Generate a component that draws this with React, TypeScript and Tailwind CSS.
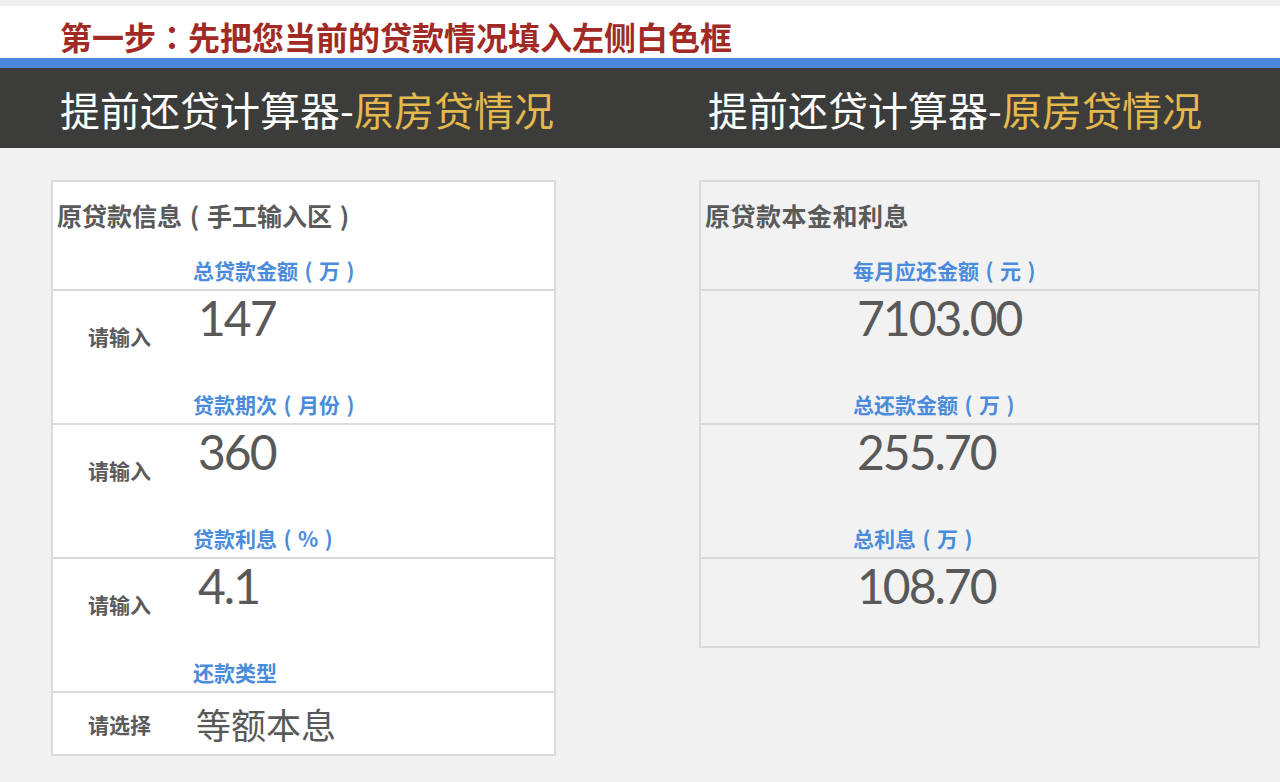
import React from "react";

const CJK = "font-['Noto_Sans_CJK_SC','Noto_Sans',sans-serif]";
const NUM = "font-['Lato','Noto_Sans_CJK_SC',sans-serif]";

function P({ c }: { c: string }) {
  return <span className="inline-block w-[1em] text-center">{c}</span>;
}

function BlueLabel({ children, indent }: { children: React.ReactNode; indent: string }) {
  return (
    <div className={`${indent} text-[21px] leading-[28px] font-bold text-[#4a8bdb] pb-[5px]`}>{children}</div>
  );
}

function InputRow({ label, value, next }: { label: string; value: string; next?: React.ReactNode }) {
  return (
    <div className="border-t-2 border-[#dadada] h-[134px] flex flex-col justify-between">
      <div className="flex items-start">
        <div className="w-[145px] pl-[35px] pt-[31px] text-[21px] leading-[28px] font-bold text-[#5a5a5a]">{label}</div>
        <div className={`${NUM} pt-[3px] text-[48px] leading-none tracking-[-2px] text-[#595959]`}>{value}</div>
      </div>
      {next ? <BlueLabel indent="pl-[140px]">{next}</BlueLabel> : null}
    </div>
  );
}

function OutputRow({ value, next, h }: { value: string; next?: React.ReactNode; h: string }) {
  return (
    <div className={`border-t-2 border-[#dadada] ${h} flex flex-col justify-between`}>
      <div className={`${NUM} pl-[156px] pt-[3px] text-[48px] leading-none tracking-[-2px] text-[#595959]`}>{value}</div>
      {next ? <BlueLabel indent="pl-[152px]">{next}</BlueLabel> : null}
    </div>
  );
}

export default function App() {
  return (
    <div className={`${CJK} w-[1280px] h-[782px] bg-[#f1f1f1] overflow-hidden`}>
      <div className="h-[6px] bg-[#efefef]" />
      <div className="h-[52px] bg-white pl-[60px] pt-[14px]">
        <div className="text-[32px] leading-[32px] font-bold text-[#a22a24] whitespace-nowrap">
          第一步<span className="font-['Noto_Sans_CJK_TC',sans-serif]">：</span>先把您当前的贷款情况填入左侧白色框
        </div>
      </div>
      <div className="h-[10px] bg-[#4a89dc]" />
      <div className="h-[80px] bg-[#3c3c3a] flex items-center">
        <div className="w-[708px] pl-[60px] text-[40px] leading-none text-white pt-[2px] whitespace-nowrap">
          提前还贷计算器-<span className="text-[#e5b94d]">原房贷情况</span>
        </div>
        <div className="text-[40px] leading-none text-white pt-[2px] whitespace-nowrap">
          提前还贷计算器-<span className="text-[#e5b94d]">原房贷情况</span>
        </div>
      </div>

      <div className="flex items-start pt-[32px]">
        <div className="ml-[51px] w-[505px] border-2 border-[#dadada] bg-white">
          <div className="h-[107px] flex flex-col justify-between">
            <div className="pl-[4px] pt-[15px] text-[25px] leading-[36px] font-bold text-[#5a5a5a]">
              原贷款信息<P c="(" />手工输入区<P c=")" />
            </div>
            <BlueLabel indent="pl-[140px]">总贷款金额<P c="(" />万<P c=")" /></BlueLabel>
          </div>
          <InputRow label="请输入" value="147" next={<>贷款期次<P c="(" />月份<P c=")" /></>} />
          <InputRow label="请输入" value="360" next={<>贷款利息<P c="(" />%<P c=")" /></>} />
          <InputRow label="请输入" value="4.1" next="还款类型" />
          <div className="border-t-2 border-[#dadada] h-[63px] flex items-center">
            <div className="w-[143px] pl-[35px] text-[21px] leading-[28px] font-bold text-[#5a5a5a]">请选择</div>
            <div className="text-[35px] leading-none text-[#595959]">等额本息</div>
          </div>
        </div>

        <div className="ml-[143px] w-[561px] border-2 border-[#dadada] bg-[#f2f2f2]">
          <div className="h-[107px] flex flex-col justify-between">
            <div className="pl-[4px] pt-[15px] text-[25px] leading-[36px] font-bold text-[#5a5a5a] tracking-[0.5px]">原贷款本金和利息</div>
            <BlueLabel indent="pl-[152px]">每月应还金额<P c="(" />元<P c=")" /></BlueLabel>
          </div>
          <OutputRow value="7103.00" next={<>总还款金额<P c="(" />万<P c=")" /></>} h="h-[134px]" />
          <OutputRow value="255.70" next={<>总利息<P c="(" />万<P c=")" /></>} h="h-[134px]" />
          <OutputRow value="108.70" h="h-[89px]" />
        </div>
      </div>
    </div>
  );
}
